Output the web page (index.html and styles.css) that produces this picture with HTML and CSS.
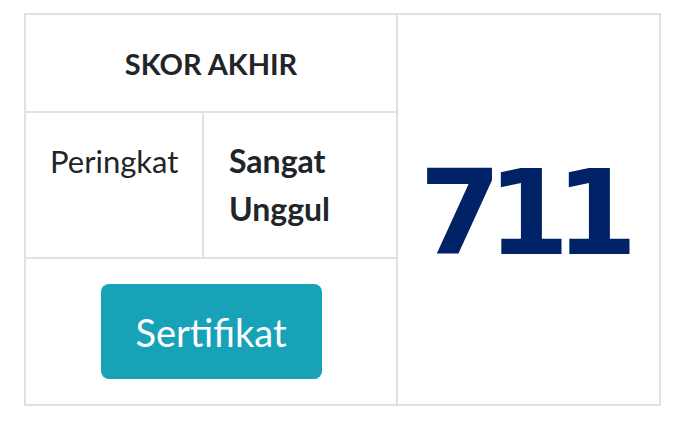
FILE: index.html
```html
<!DOCTYPE html>
<html lang="id">
<head>
<meta charset="utf-8">
<title>Skor Akhir</title>
<link rel="stylesheet" href="styles.css">
</head>
<body>
<table class="score-table">
  <colgroup>
    <col class="col-label">
    <col class="col-value">
    <col class="col-score">
  </colgroup>
  <tr class="row-head">
    <th class="cell-title" colspan="2">SKOR AKHIR</th>
    <td class="cell-score" rowspan="3">711</td>
  </tr>
  <tr class="row-rank">
    <td class="cell-label">Peringkat</td>
    <td class="cell-value">Sangat<br>Unggul</td>
  </tr>
  <tr class="row-action">
    <td class="cell-action" colspan="2"><button class="btn-cert" type="button">Sertifikat</button></td>
  </tr>
</table>
</body>
</html>
```

FILE: styles.css
```css
html, body {
  margin: 0;
  padding: 0;
  background: #ffffff;
}

body {
  font-family: "Lato", "Noto Sans", sans-serif;
  color: #212529;
  padding: 13px 0 0 24px;
}

.score-table {
  border-collapse: collapse;
  table-layout: fixed;
  width: 635px;
  border: 2px solid #dee2e6;
}

.col-label { width: 178px; }
.col-value { width: 194px; }
.col-score { width: 263px; }

.score-table th,
.score-table td {
  border: 2px solid #dee2e6;
  padding: 0;
}

.row-head { height: 98px; }
.row-rank { height: 146px; }
.row-action { height: 147px; }

.cell-title {
  text-align: center;
  font-size: 29px;
  font-weight: 700;
}

.cell-label {
  vertical-align: top;
  padding: 24px 0 0 24px !important;
  font-size: 31px;
  line-height: 48px;
  font-weight: 400;
}

.cell-value {
  vertical-align: top;
  padding: 24px 0 0 25px !important;
  font-size: 32px;
  line-height: 48px;
  font-weight: 700;
}

.cell-action {
  text-align: center;
  vertical-align: middle;
}

.btn-cert {
  width: 221px;
  height: 95px;
  border: none;
  border-radius: 8px;
  background: #17a2b8;
  color: #ffffff;
  font-family: "Lato", "Noto Sans", sans-serif;
  font-size: 38px;
  font-weight: 400;
  cursor: pointer;
}

.cell-score {
  text-align: center;
  vertical-align: middle;
  font-family: "DejaVu Sans", "Verdana", sans-serif;
  font-weight: 700;
  font-size: 118px;
  letter-spacing: -14px;
  text-indent: -14px;
  color: #002266;
  padding-top: 6px !important;
}
```
